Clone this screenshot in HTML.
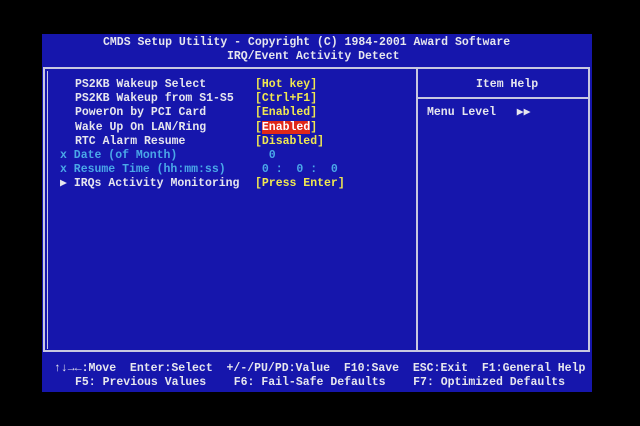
<!DOCTYPE html>
<html><head><style>
body{margin:0;background:#000;width:640px;height:426px;overflow:hidden;position:relative;font-family:"Liberation Mono",monospace;font-weight:bold;font-size:11.5px;}
#blue{position:absolute;left:42px;top:34px;width:550px;height:358px;background:#1616ac;}
.t{position:absolute;white-space:pre;line-height:14.2px;}
.w{color:#e6e6ee}.y{color:#f0e850}.c{color:#4aa8e8}
.l{position:absolute;background:#c8c8e0;}
</style></head><body>
<div id="blue"></div>
<div class="t w" style="left:103px;top:36px">CMDS Setup Utility - Copyright (C) 1984-2001 Award Software</div>
<div class="t w" style="left:227px;top:50px">IRQ/Event Activity Detect</div>
<div class="l" style="left:43px;top:67px;width:547px;height:2px"></div>
<div class="l" style="left:43px;top:350px;width:547px;height:2px"></div>
<div class="l" style="left:43px;top:67px;width:2px;height:285px"></div>
<div class="l" style="left:47px;top:71px;width:1px;height:278px"></div>
<div class="l" style="left:588px;top:67px;width:2px;height:285px"></div>
<div class="l" style="left:416px;top:69px;width:2px;height:281px"></div>
<div class="l" style="left:418px;top:97px;width:170px;height:2px"></div>
<div class="t w" style="left:75px;top:78px">PS2KB Wakeup Select
PS2KB Wakeup from S1-S5
PowerOn by PCI Card
Wake Up On LAN/Ring
RTC Alarm Resume</div>
<div class="t y" style="left:255px;top:78px">[Hot key]
[Ctrl+F1]
[Enabled]
[<span style="background:#e02818;color:#fff">Enabled</span>]
[Disabled]</div>
<div class="t c" style="left:60px;top:149px">x Date (of Month)
x Resume Time (hh:mm:ss)</div>
<div class="t c" style="left:255px;top:149px">  0
 0 :  0 :  0</div>
<div class="t w" style="left:60px;top:177px">&#9654; IRQs Activity Monitoring</div>
<div class="t y" style="left:255px;top:177px">[Press Enter]</div>
<div class="t w" style="left:476px;top:78px">Item Help</div>
<div class="t w" style="left:427px;top:106px">Menu Level   &#9654;&#9654;</div>
<div class="t w" style="left:54px;top:362px">&#8593;&#8595;&#8594;&#8592;:Move  Enter:Select  +/-/PU/PD:Value  F10:Save  ESC:Exit  F1:General Help</div>
<div class="t w" style="left:75px;top:376px">F5: Previous Values    F6: Fail-Safe Defaults    F7: Optimized Defaults</div>
</body></html>
